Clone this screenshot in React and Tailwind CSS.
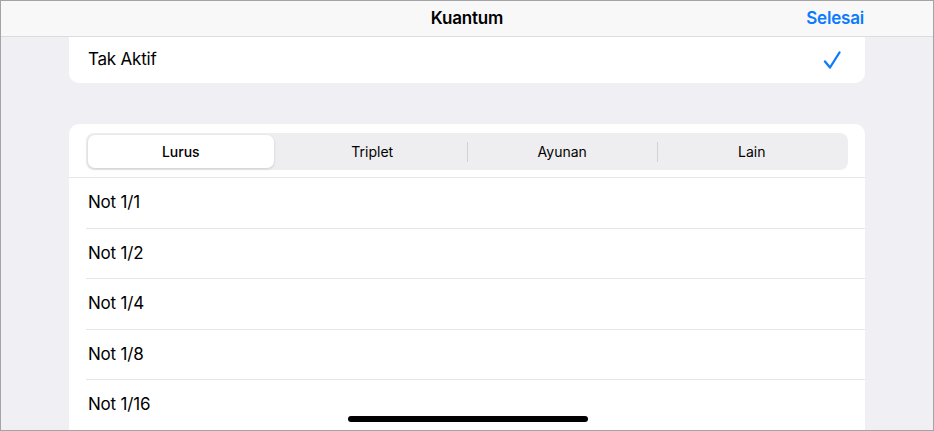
const notes = ['Not 1/1', 'Not 1/2', 'Not 1/4', 'Not 1/8', 'Not 1/16'];
const segments = ['Lurus', 'Triplet', 'Ayunan', 'Lain'];

export default function App() {
  return (
    <div
      className="relative flex h-[431px] w-[934px] flex-col overflow-hidden border border-[#a4a4a6] bg-[#f0eff4] text-black"
      style={{ fontFamily: 'Inter, "Noto Sans", sans-serif' }}
    >
      {/* nav bar */}
      <div className="relative flex h-[36px] shrink-0 items-center justify-center border-b border-[#dcdcde] bg-[#f8f8f9]">
        <span className="text-[17px] font-semibold tracking-[-0.2px]">Kuantum</span>
        <span className="absolute right-[69px] text-[17px] font-semibold tracking-[-0.2px] text-[#0a7aff]">
          Selesai
        </span>
      </div>

      <div className="flex flex-1 flex-col px-[68px]">
        <div className="flex h-[46px] items-center justify-between rounded-b-[10px] bg-white pl-[19px] pr-[24px]">
          <span className="text-[17px] tracking-[-0.2px]">Tak Aktif</span>
          <svg width="18" height="20" viewBox="0 0 18 20" fill="none" className="text-[#0a7aff]">
            <path
              d="M2 11.5 L7 17.5 L16.5 2.5"
              stroke="currentColor"
              strokeWidth="2.3"
              strokeLinecap="round"
              strokeLinejoin="round"
            />
          </svg>
        </div>

        <div className="mt-[41px] flex flex-1 flex-col rounded-t-[10px] bg-white">
          <div className="px-[17px] pb-[7px] pt-[9px]">
            <div className="flex h-[37px] items-center rounded-[8px] bg-[#eeeef0] p-[2px]">
              {segments.map((s, i) => (
                <div key={s} className="flex h-full flex-1 items-center">
                  {i > 1 && <div className="h-[20px] w-px bg-[#d2d2d6]" />}
                  <div
                    className={
                      i === 0
                        ? 'mr-[4px] flex h-full flex-1 items-center justify-center rounded-[7px] bg-white text-[14px] font-medium shadow-[0_1px_3px_rgba(0,0,0,0.14)]'
                        : 'flex h-full flex-1 items-center justify-center text-[14px]'
                    }
                  >
                    {s}
                  </div>
                </div>
              ))}
            </div>
          </div>
          <div className="h-px bg-[#e5e5ea]" />
          {notes.map((n) => (
            <div
              key={n}
              className="ml-[17px] flex h-[50.5px] shrink-0 items-center border-b border-[#e5e5ea] pl-[2px]"
            >
              <span className="text-[17px] tracking-[-0.2px]">{n}</span>
            </div>
          ))}
        </div>
      </div>

      <div className="absolute left-[347px] top-[415px] h-[6px] w-[240px] rounded-full bg-black" />
    </div>
  );
}
